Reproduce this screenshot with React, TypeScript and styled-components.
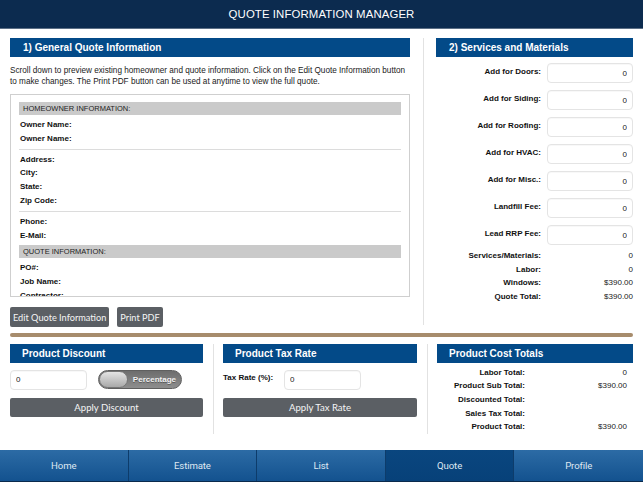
import React from "react";
import styled, { createGlobalStyle } from "styled-components";

const GlobalStyle = createGlobalStyle`
  * {
    box-sizing: border-box;
  }

  html,
  body {
    margin: 0;
    padding: 0;
    background: #ffffff;
  }

  body {
    font-family: "Liberation Sans", Arial, sans-serif;
    color: #111;
  }
`;

const homeownerRows = [
  ["Owner Name:", "Owner Name:"],
  ["Address:", "City:", "State:", "Zip Code:"],
  ["Phone:", "E-Mail:"],
];

const quoteRows = ["PO#:", "Job Name:", "Contractor:"];

const serviceInputs = [
  "Add for Doors:",
  "Add for Siding:",
  "Add for Roofing:",
  "Add for HVAC:",
  "Add for Misc.:",
  "Landfill Fee:",
  "Lead RRP Fee:",
];

const serviceTotals = [
  { label: "Services/Materials:", value: "0" },
  { label: "Labor:", value: "0" },
  { label: "Windows:", value: "$390.00" },
  { label: "Quote Total:", value: "$390.00" },
];

const costTotals = [
  { label: "Labor Total:", value: "0" },
  { label: "Product Sub Total:", value: "$390.00" },
  { label: "Discounted Total:", value: "" },
  { label: "Sales Tax Total:", value: "" },
  { label: "Product Total:", value: "$390.00" },
];

const tabs = ["Home", "Estimate", "List", "Quote", "Profile"];

const Page = styled.div`
  width: 643px;
  height: 482px;
  display: flex;
  flex-direction: column;
  overflow: hidden;
`;

const TopBar = styled.header`
  height: 29px;
  flex-shrink: 0;
  background: #0c2b4f;
  border-bottom: 1px solid #5c6f86;
  display: flex;
  align-items: center;
  justify-content: center;
  color: #ffffff;
  font-size: 11.4px;
  letter-spacing: 0.1px;
`;

const Upper = styled.div`
  display: flex;
  padding: 9px 10px 0;
`;

const LeftColumn = styled.section`
  width: 400px;
  flex-shrink: 0;
`;

const RightColumn = styled.section`
  width: 210px;
  flex-shrink: 0;
  margin-left: 13px;
  padding-left: 12px;
  border-left: 1px solid #e2e2e2;
  height: 287px;
`;

const SectionHeader = styled.h2`
  margin: 0;
  height: 19px;
  line-height: 19px;
  padding-left: 13px;
  background: #034a88;
  color: #ffffff;
  font-size: 10px;
  font-weight: bold;
`;

const Intro = styled.p`
  margin: 8px 0 0;
  font-size: 8.2px;
  line-height: 11px;
  color: #1a1a1a;
`;

const InfoBox = styled.div`
  margin-top: 7px;
  height: 203px;
  border: 1px solid #cfcfcf;
  padding: 7px 8px 0;
  overflow: hidden;
`;

const Band = styled.div<{ $gap?: number }>`
  height: 13px;
  line-height: 13px;
  margin-top: ${({ $gap }) => $gap ?? 0}px;
  margin-bottom: 3px;
  padding-left: 4px;
  background: #cacaca;
  font-size: 7.5px;
  color: #222;
`;

const InfoRow = styled.div`
  height: 13.8px;
  line-height: 13.8px;
  padding-left: 1px;
  font-size: 8px;
  font-weight: bold;
`;

const Rule = styled.hr`
  margin: 3px 0 3px;
  border: none;
  border-top: 1px solid #dcdcdc;
`;

const ButtonRow = styled.div`
  display: flex;
  gap: 8px;
  margin-top: 10px;
`;

const GrayButton = styled.button<{ $wide?: boolean }>`
  height: ${({ $wide }) => ($wide ? 19 : 20)}px;
  width: ${({ $wide }) => ($wide ? "100%" : "auto")};
  padding: 0 3px;
  border: none;
  border-radius: 2px;
  background: #5b5f64;
  color: #f4f4f4;
  font-family: Lato, "Liberation Sans", sans-serif;
  font-size: ${({ $wide }) => ($wide ? 9.6 : 9.2)}px;
  cursor: pointer;
`;

const FieldGrid = styled.div`
  display: grid;
  grid-template-columns: 105px 86px;
  column-gap: 6px;
  row-gap: 7px;
  margin-top: 6px;
  width: 197px;
`;

const FieldLabel = styled.label`
  align-self: center;
  text-align: right;
  font-size: 8px;
  font-weight: bold;
  padding-bottom: 4px;
`;

const NumberInput = styled.input<{ $align?: string; $width?: number }>`
  width: ${({ $width }) => ($width ? `${$width}px` : "100%")};
  height: 20px;
  border: 1px solid #e4e4e4;
  border-radius: 4px;
  padding: 0 5px;
  font-family: "Liberation Sans", Arial, sans-serif;
  font-size: 8px;
  color: #222;
  text-align: ${({ $align }) => $align ?? "left"};
  box-shadow: inset 0 1px 1px rgba(0, 0, 0, 0.03);
  outline: none;
`;

const TotalsGrid = styled.div<{ $labelWidth: number }>`
  display: grid;
  grid-template-columns: ${({ $labelWidth }) => $labelWidth}px 1fr;
  column-gap: 6px;
  font-size: 8px;
  line-height: 13.7px;
`;

const ServiceTotals = styled(TotalsGrid)`
  width: 197px;
  margin-top: 4px;
`;

const TotalLabel = styled.span`
  text-align: right;
  font-weight: bold;
`;

const TotalValue = styled.span`
  text-align: right;
  color: #222;
`;

const TanRule = styled.div`
  margin: 6px 10px 0;
  height: 3.5px;
  flex-shrink: 0;
  border-radius: 2px;
  background: #a78c6c;
`;

const Lower = styled.div`
  display: grid;
  grid-template-columns: 204px 214px 1fr;
  margin: 7px 10px 0;
  height: 89px;
`;

const Panel = styled.section<{ $first?: boolean; $last?: boolean }>`
  padding-left: ${({ $first }) => ($first ? 0 : 9)}px;
  padding-right: ${({ $last }) => ($last ? 0 : 10)}px;
  border-right: ${({ $last }) => ($last ? "none" : "1px solid #e2e2e2")};
`;

const PanelHeader = styled(SectionHeader)`
  padding-left: 12px;
`;

const ControlRow = styled.div`
  display: flex;
  align-items: center;
  margin: 7px 0 7px;
  height: 20px;
`;

const Toggle = styled.div`
  position: relative;
  margin-left: 11px;
  width: 84px;
  height: 19px;
  border-radius: 10px;
  border: 1px solid #5f5f5f;
  background: linear-gradient(#6d6d6d, #8e8e8e);
  display: flex;
  align-items: center;
  justify-content: flex-end;
  padding-right: 5px;
  color: #f2f2f2;
  font-size: 8px;
  font-weight: bold;
  text-shadow: 0 1px 0 rgba(0, 0, 0, 0.35);
`;

const Knob = styled.span`
  position: absolute;
  left: 0;
  top: 0;
  width: 29px;
  height: 17px;
  border-radius: 9px;
  background: linear-gradient(#e4e4e4, #a9a9a9);
  border: 1px solid #777;
`;

const TaxLabel = styled.span`
  width: 61px;
  font-size: 8px;
  font-weight: bold;
  padding-bottom: 5px;
`;

const CostTotals = styled(TotalsGrid)`
  margin-top: 3px;
  padding-right: 6px;
`;

const TabBar = styled.nav`
  margin-top: auto;
  height: 32px;
  flex-shrink: 0;
  display: grid;
  grid-template-columns: repeat(5, 1fr);
  background: #0a2f57;
  border-bottom: 1px solid #0a2a4c;
`;

const Tab = styled.button<{ $active?: boolean }>`
  border: none;
  border-right: 1px solid #0d3c6b;
  background: ${({ $active }) =>
    $active
      ? "linear-gradient(#0a467f, #074179)"
      : "linear-gradient(#2c6ba5, #13528f)"};
  color: #dfe8f2;
  font-family: Roboto, "Liberation Sans", sans-serif;
  font-size: 9.6px;
  letter-spacing: -0.1px;
  cursor: pointer;

  &:last-child {
    border-right: none;
  }
`;

const App = () => {
  return (
    <>
      <GlobalStyle />
      <Page>
        <TopBar>QUOTE INFORMATION MANAGER</TopBar>

        <Upper>
          <LeftColumn>
            <SectionHeader>1) General Quote Information</SectionHeader>
            <Intro>
              Scroll down to preview existing homeowner and quote information.
              Click on the Edit Quote Information button to make changes. The
              Print PDF button can be used at anytime to view the full quote.
            </Intro>
            <InfoBox>
              <Band>HOMEOWNER INFORMATION:</Band>
              {homeownerRows.map((group, index) => (
                <React.Fragment key={group[0] + index}>
                  {index > 0 && <Rule />}
                  {group.map((label, i) => (
                    <InfoRow key={`${label}${i}`}>{label}</InfoRow>
                  ))}
                </React.Fragment>
              ))}
              <Band $gap={3}>QUOTE INFORMATION:</Band>
              {quoteRows.map((label) => (
                <InfoRow key={label}>{label}</InfoRow>
              ))}
            </InfoBox>
            <ButtonRow>
              <GrayButton>Edit Quote Information</GrayButton>
              <GrayButton>Print PDF</GrayButton>
            </ButtonRow>
          </LeftColumn>

          <RightColumn>
            <SectionHeader>2) Services and Materials</SectionHeader>
            <FieldGrid>
              {serviceInputs.map((label) => (
                <React.Fragment key={label}>
                  <FieldLabel>{label}</FieldLabel>
                  <NumberInput $align="right" defaultValue="0" />
                </React.Fragment>
              ))}
            </FieldGrid>
            <ServiceTotals $labelWidth={105}>
              {serviceTotals.map(({ label, value }) => (
                <React.Fragment key={label}>
                  <TotalLabel>{label}</TotalLabel>
                  <TotalValue>{value}</TotalValue>
                </React.Fragment>
              ))}
            </ServiceTotals>
          </RightColumn>
        </Upper>

        <TanRule />

        <Lower>
          <Panel $first>
            <PanelHeader>Product Discount</PanelHeader>
            <ControlRow>
              <NumberInput $width={77} defaultValue="0" />
              <Toggle>
                <Knob />
                Percentage
              </Toggle>
            </ControlRow>
            <GrayButton $wide>Apply Discount</GrayButton>
          </Panel>

          <Panel>
            <PanelHeader>Product Tax Rate</PanelHeader>
            <ControlRow>
              <TaxLabel>Tax Rate (%):</TaxLabel>
              <NumberInput $width={77} defaultValue="0" />
            </ControlRow>
            <GrayButton $wide>Apply Tax Rate</GrayButton>
          </Panel>

          <Panel $last>
            <PanelHeader>Product Cost Totals</PanelHeader>
            <CostTotals $labelWidth={88}>
              {costTotals.map(({ label, value }) => (
                <React.Fragment key={label}>
                  <TotalLabel>{label}</TotalLabel>
                  <TotalValue>{value}</TotalValue>
                </React.Fragment>
              ))}
            </CostTotals>
          </Panel>
        </Lower>

        <TabBar>
          {tabs.map((tab) => (
            <Tab key={tab} $active={tab === "Quote"}>
              {tab}
            </Tab>
          ))}
        </TabBar>
      </Page>
    </>
  );
};

export default App;
